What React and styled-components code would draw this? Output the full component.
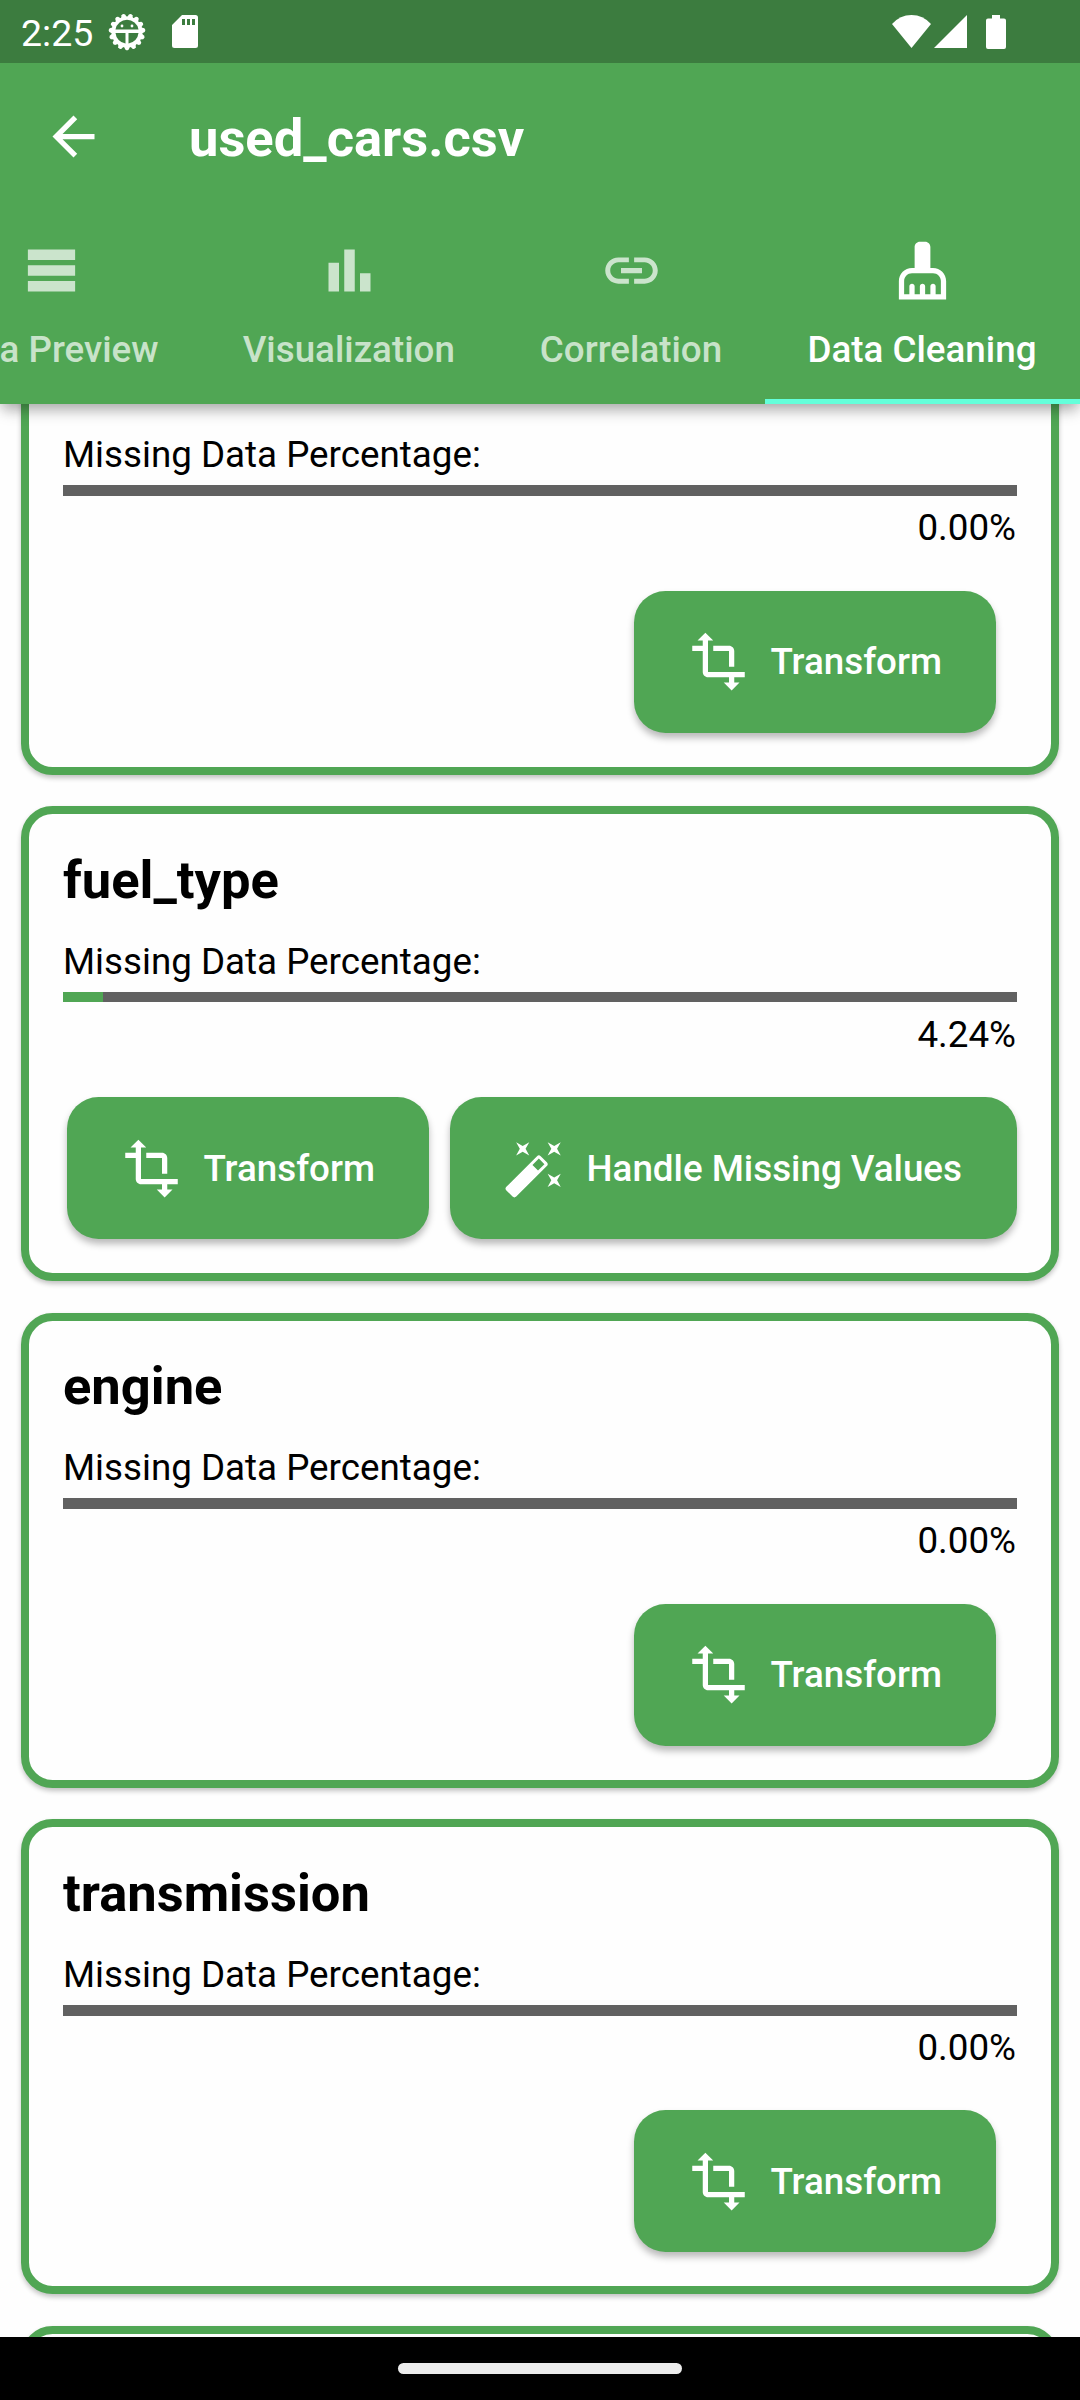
import React from "react";
import styled, { createGlobalStyle } from "styled-components";
import {
  MdArrowBack,
  MdTableRows,
  MdBarChart,
  MdLink,
  MdCleaningServices,
  MdTransform,
  MdAutoFixHigh,
} from "react-icons/md";

const green = "#50a654";

const GlobalStyle = createGlobalStyle`
  html, body { margin: 0; padding: 0; background: #fff; }
  * { box-sizing: border-box; }
`;

const Screen = styled.div`
  width: 1080px;
  height: 2400px;
  display: flex;
  flex-direction: column;
  overflow: hidden;
  background: #fefefe;
  color: #000;
  font-family: Roboto, "Liberation Sans", sans-serif;
`;

const Header = styled.header`
  flex: none;
  z-index: 1;
  height: 404px;
  display: flex;
  flex-direction: column;
  background: ${green};
  color: #fff;
  box-shadow: 0 10px 14px -3px rgba(0, 0, 0, 0.22), 0 3px 12px rgba(0, 0, 0, 0.16);
`;

const StatusBar = styled.div`
  height: 63px;
  flex: none;
  display: flex;
  align-items: center;
  justify-content: space-between;
  padding: 0 74px 0 21px;
  background: #3c7c3f;
`;

const StatusGroup = styled.div`
  display: flex;
  align-items: center;
`;

const Clock = styled.span`
  font-size: 37.5px;
  line-height: 43px;
  width: 87px;
  padding-top: 3px;
`;

const StatusIcon = styled.svg`
  display: block;
  fill: #fff;
  width: ${(p) => p.$w}px;
  height: ${(p) => p.$h}px;
  margin-left: ${(p) => p.$gap || 0}px;
`;

const Toolbar = styled.div`
  height: 147px;
  flex: none;
  display: flex;
  align-items: center;
  padding-left: 42px;
  gap: 84px;

  svg { width: 63px; height: 63px; }
`;

const Title = styled.h1`
  margin: 0;
  padding-top: 2px;
  font-size: 52.5px;
  line-height: 62px;
  font-weight: 700;
`;

const TabBar = styled.nav`
  flex: 1;
  display: flex;
  justify-content: flex-end;
  overflow: hidden;
`;

const Tab = styled.div`
  flex: none;
  width: ${(p) => p.$width}px;
  display: flex;
  flex-direction: column;
  align-items: center;
  padding-top: 29px;
  color: ${(p) => (p.$active ? "#fff" : "rgba(255, 255, 255, 0.7)")};
  border-bottom: 5px solid ${(p) => (p.$active ? "#64ffda" : "transparent")};

  svg { width: 63px; height: 63px; }
`;

const TabLabel = styled.span`
  margin-top: 26px;
  padding-right: 1px;
  font-size: 36.75px;
  line-height: 43px;
  font-weight: 500;
  white-space: nowrap;
`;

const List = styled.main`
  flex: 1;
  min-height: 0;
  overflow: hidden;
  display: flex;
  flex-direction: column;
  justify-content: flex-start;
  padding: 0 21px;
`;

const Card = styled.section`
  flex: none;
  height: 475.2px;
  margin-bottom: 31.4px;
  padding: 34.6px 34px 34px;
  display: flex;
  flex-direction: column;
  border: 8px solid ${green};
  border-radius: 31.5px;
  background: #fefefe;
  box-shadow: 0 3px 5px rgba(0, 0, 0, 0.24);

  &:first-child { margin-top: -104.5px; }
`;

const ColumnName = styled.h2`
  margin: 0;
  min-height: 62px;
  font-size: 52.5px;
  line-height: 62px;
  font-weight: 700;
`;

const MissingLabel = styled.div`
  margin-top: 29.2px;
  font-size: 36.75px;
  line-height: 43px;
`;

const Track = styled.div`
  height: 10.5px;
  margin-top: 9px;
  flex: none;
  background: #616161;
`;

const Fill = styled.div`
  height: 100%;
  background: ${green};
`;

const Percent = styled.div`
  margin-top: 10.2px;
  padding-right: 1px;
  font-size: 36.75px;
  line-height: 43px;
  text-align: right;
`;

const Actions = styled.div`
  margin-top: auto;
  display: flex;
  justify-content: flex-end;
  gap: 21px;
  padding-right: ${(p) => (p.$inset ? 21 : 0)}px;
`;

const Button = styled.button`
  width: ${(p) => p.$width}px;
  height: 142px;
  flex: none;
  display: flex;
  align-items: center;
  gap: 21px;
  padding: 0 0 0 52.5px;
  border: 0;
  border-radius: 31.5px;
  background: ${green};
  color: #fff;
  font: 500 36.75px/43px Roboto, "Liberation Sans", sans-serif;
  white-space: nowrap;
  box-shadow: 0 5px 7px rgba(0, 0, 0, 0.27);

  svg { width: 63px; height: 63px; flex: none; }
`;

const NavBar = styled.footer`
  height: 63px;
  flex: none;
  display: flex;
  align-items: center;
  justify-content: center;
  background: #000;
`;

const NavHandle = styled.div`
  width: 284px;
  height: 11px;
  border-radius: 6px;
  background: #ececec;
`;

const teeth = Array.from({ length: 15 }, (_, i) => 90 + i * 24);

function DebugIcon() {
  return (
    <StatusIcon viewBox="-19 -19 38 38" $w={38} $h={38}>
      {teeth.map((a) => (
        <path key={a} transform={`rotate(${a})`} d="M13 -3.6L17.6 -1.8Q19.2 0 17.6 1.8L13 3.6z" />
      ))}
      <path fillRule="evenodd" d="M-15.5 0a15.5 15.5 0 1 0 31 0a15.5 15.5 0 1 0 -31 0zM-11.5 -2.6A11.7 11.7 0 0 1 11.5 -2.6zM-11.5 1H-1.5V11.5A11.7 11.7 0 0 1 -11.5 1zM11.5 1H1.5V11.5A11.7 11.7 0 0 0 11.5 1z" />
      <circle cx="-5" cy="-6" r="1.4" />
      <circle cx="5" cy="-6" r="1.4" />
    </StatusIcon>
  );
}

const tabs = [
  { label: "Data Preview", width: 298, Icon: MdTableRows },
  { label: "Visualization", width: 297.5, Icon: MdBarChart },
  { label: "Correlation", width: 267, Icon: MdLink },
  { label: "Data Cleaning", width: 315, Icon: MdCleaningServices, active: true },
];

const columns = [
  { missing: 0 },
  { name: "fuel_type", missing: 4.24 },
  { name: "engine", missing: 0 },
  { name: "transmission", missing: 0 },
];

function ColumnCard({ name, missing }) {
  return (
    <Card>
      <ColumnName>{name}</ColumnName>
      <MissingLabel>Missing Data Percentage:</MissingLabel>
      <Track>
        <Fill style={{ width: `${missing}%` }} />
      </Track>
      <Percent>{missing.toFixed(2)}%</Percent>
      <Actions $inset={missing === 0}>
        <Button $width={362}>
          <MdTransform />
          Transform
        </Button>
        {missing > 0 && (
          <Button $width={567}>
            <MdAutoFixHigh />
            Handle Missing Values
          </Button>
        )}
      </Actions>
    </Card>
  );
}

export default function App() {
  return (
    <Screen>
      <GlobalStyle />
      <Header>
        <StatusBar>
          <StatusGroup>
            <Clock>2:25</Clock>
            <DebugIcon />
            <StatusIcon viewBox="0 0 26 33" $w={26} $h={33} $gap={26}>
              <path fillRule="evenodd" d="M10 0H23.500Q26 0 26 2.500V30.500Q26 33 23.500 33H2.500Q0 33 0 30.500V10zM10 4v6h3v-6zM15 4v6h3v-6zM20 4v6h3v-6z" />
            </StatusIcon>
          </StatusGroup>
          <StatusGroup>
            <StatusIcon viewBox="0 0 39 33" $w={39} $h={33}>
              <path d="M0 9Q8 0 19.500 0T39 9L19.500 33z" />
            </StatusIcon>
            <StatusIcon viewBox="0 0 33 33" $w={33} $h={33} $gap={3}>
              <path d="M33 0V33H0z" />
            </StatusIcon>
            <StatusIcon viewBox="0 0 20 34" $w={20} $h={34} $gap={19}>
              <path d="M6 0H14V3.500H18Q20 3.500 20 5.500V32Q20 34 18 34H2Q0 34 0 32V5.500Q0 3.500 2 3.500H6z" />
            </StatusIcon>
          </StatusGroup>
        </StatusBar>
        <Toolbar>
          <MdArrowBack />
          <Title>used_cars.csv</Title>
        </Toolbar>
        <TabBar>
          {tabs.map(({ label, width, Icon, active }) => (
            <Tab key={label} $width={width} $active={active}>
              <Icon />
              <TabLabel>{label}</TabLabel>
            </Tab>
          ))}
        </TabBar>
      </Header>
      <List>
        {columns.map((c, i) => (
          <ColumnCard key={i} {...c} />
        ))}
        <Card />
      </List>
      <NavBar>
        <NavHandle />
      </NavBar>
    </Screen>
  );
}
